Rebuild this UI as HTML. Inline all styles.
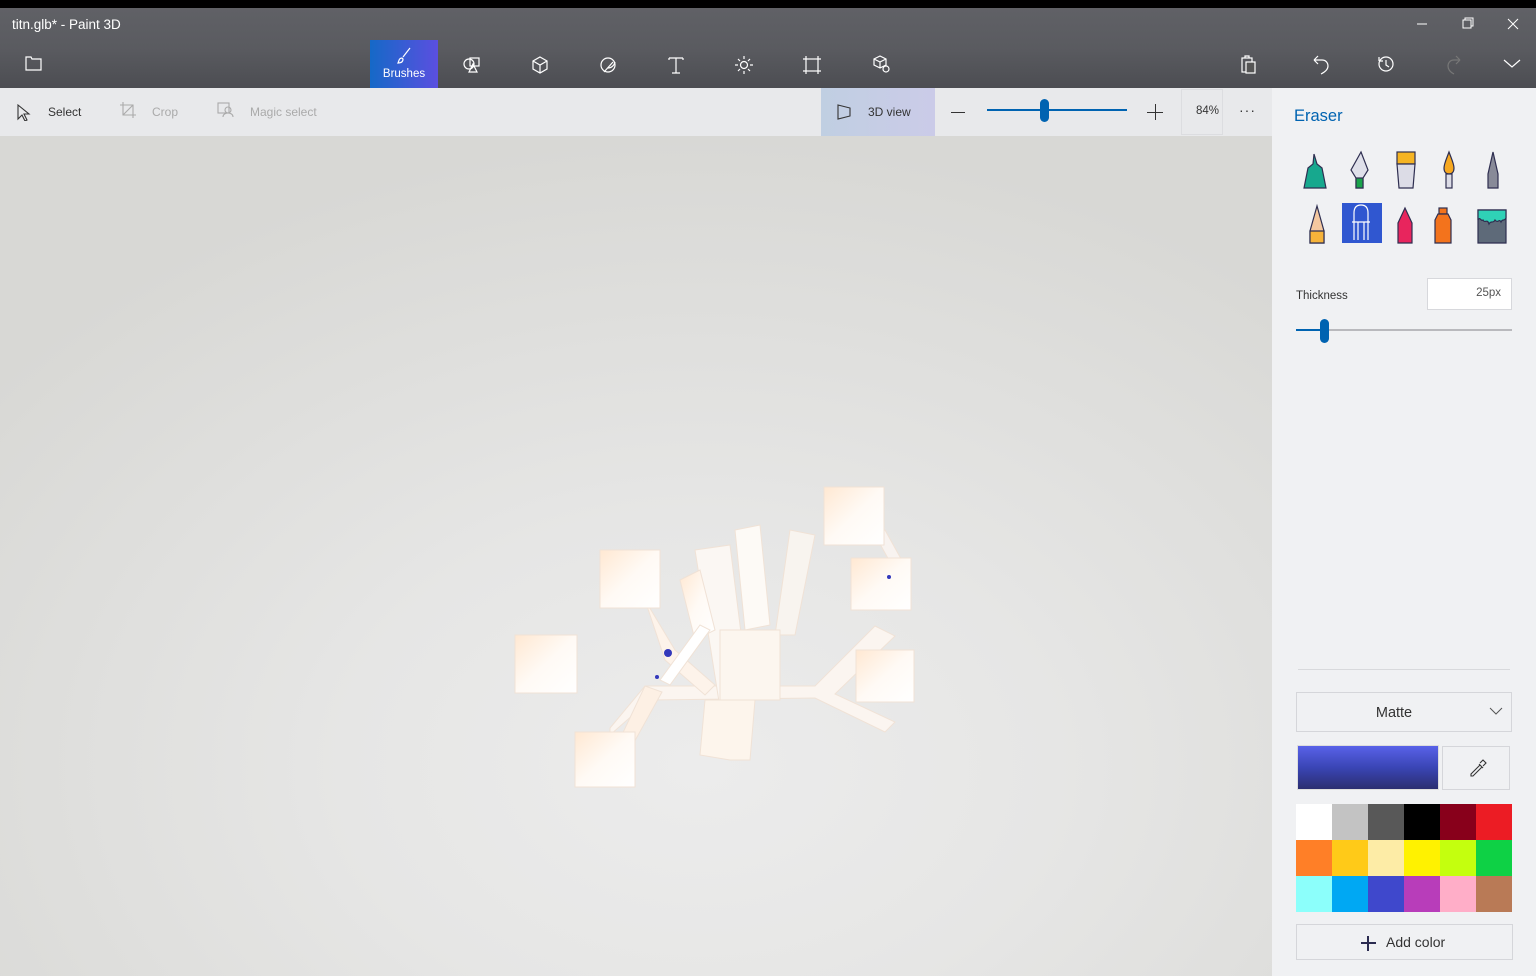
<!DOCTYPE html>
<html><head><meta charset="utf-8"><style>
*{margin:0;padding:0;box-sizing:border-box}
body{width:1536px;height:976px;overflow:hidden;font-family:"Segoe UI","Liberation Sans",sans-serif;background:#e5e5e3;position:relative}
.abs{position:absolute}
#blk{left:0;top:0;width:1536px;height:8px;background:#000}
#top{left:0;top:8px;width:1536px;height:80px;background:linear-gradient(180deg,#606166 0%,#5a5b60 50%,#4c4d52 100%)}
#title{left:12px;top:17px;color:#fff;font-size:13.5px}
#tools{left:0;top:88px;width:1272px;height:48px;background:#e8e9eb}
#canvas{left:0;top:136px;width:1272px;height:840px;background:radial-gradient(ellipse 70% 75% at 55% 75%,#ececec 0%,#e6e6e5 40%,#d8d8d5 100%)}
#side{left:1272px;top:88px;width:264px;height:888px;background:#f0f1f3}
.tb{color:#333;font-size:12px}
.dis{color:#aaa}
svg{display:block}
</style></head><body>
<div class="abs" id="blk"></div>
<div class="abs" id="top"></div>
<div class="abs" id="title">titn.glb* - Paint 3D</div>
<svg class="abs" style="left:1408px;top:14px" width="120" height="20" fill="none" stroke="#fff" stroke-width="1"><line x1="9" y1="10" x2="19" y2="10"/><rect x="55" y="6" width="8" height="8"/><path d="M57 6V4h8v8h-2"/><path d="M100 5l10 10M110 5l-10 10"/></svg>
<svg class="abs" style="left:24px;top:54px" width="20" height="18" fill="none" stroke="#fff" stroke-width="1.2"><path d="M2 3h5l1 2h9v11H2z"/></svg>
<div class="abs" style="left:370px;top:40px;width:68px;height:48px;background:linear-gradient(90deg,#1569c7,#5b4fe0)"></div>
<svg class="abs" style="left:394px;top:46px" width="20" height="20" fill="none" stroke="#fff" stroke-width="1.2"><path d="M16 2L9 11M8 12c-3 0-3 3-4 5 3 0 5-1 5-4z"/></svg>
<div class="abs" style="left:370px;top:68px;width:68px;text-align:center;color:#fff;font-size:11.5px">Brushes</div>
<svg class="abs" style="left:460px;top:52px" width="440" height="26" fill="none" stroke="#fff" stroke-width="1.2">
<circle cx="9" cy="12" r="5"/><rect x="10" y="6" width="9" height="8"/><path d="M13 12l-4 8h8z"/>
<path d="M80 5l7 4v8l-7 4-7-4V9zM73 9l7 4 7-4M80 13v8"/>
<circle cx="148" cy="13" r="7"/><path d="M144 20l9-10M148 16c3 0 6-2 7-6"/>
<path d="M209 6h14M216 6v15M212 21h8M209 6v2M223 6v2"/>
<circle cx="284" cy="13" r="3.5"/><path d="M284 4v3M284 19v3M275 13h3M290 13h3M278 7l2 2M288 17l2 2M278 19l2-2M288 9l2-2"/>
<rect x="346" y="7" width="12" height="12"/><path d="M346 4v3M358 4v3M346 19v3M358 19v3M343 7h3M358 7h3M343 19h3M358 19h3"/>
<path d="M420 4l6 3v6l-6 3-6-3V7zM414 7l6 3 6-3M420 10v6"/><circle cx="426" cy="17" r="3"/>
</svg>
<svg class="abs" style="left:1238px;top:52px" width="290" height="26" fill="none" stroke="#fff" stroke-width="1.2">
<rect x="4" y="6" width="10" height="14"/><rect x="8" y="10" width="9" height="11" fill="#555"/><path d="M7 6V4h4v2"/>
<path d="M76 8h8c4 0 6 3 6 6s-3 6-7 8M76 8l4-4M76 8l4 4"/>
<circle cx="148" cy="12" r="7"/><path d="M148 8v5l3 2M141 9l0-4M141 9h4"/>
<path d="M222 8h-6c-4 0-6 3-6 6s2 6 6 8M222 8l-4-4M222 8l-4 4" stroke="#777"/>
<path d="M266 8l8 7 8-7"/>
</svg>
<div class="abs" id="tools"></div>
<svg class="abs" style="left:16px;top:103px" width="16" height="18" fill="none" stroke="#333" stroke-width="1.1"><path d="M2 2l11 9h-5l3 6-2 1-3-6-4 4z"/></svg>
<div class="abs tb" style="left:48px;top:105px">Select</div>
<svg class="abs" style="left:119px;top:101px" width="18" height="18" fill="none" stroke="#aaa" stroke-width="1.1"><path d="M4 1v13h13M1 4h13v13M14 4L4 14"/></svg>
<div class="abs tb dis" style="left:152px;top:105px">Crop</div>
<svg class="abs" style="left:217px;top:102px" width="18" height="16" fill="none" stroke="#aaa" stroke-width="1.1"><rect x="1" y="1" width="11" height="10"/><circle cx="11" cy="8" r="3"/><path d="M6 15c0-3 3-4 5-4s5 1 5 4"/></svg>
<div class="abs tb dis" style="left:250px;top:105px">Magic select</div>
<div class="abs" style="left:821px;top:88px;width:114px;height:48px;background:linear-gradient(90deg,#c0cfe2,#cbcbe8)"></div>
<svg class="abs" style="left:836px;top:103px" width="18" height="18" fill="none" stroke="#333" stroke-width="1.1"><path d="M2 2l12 3v8L2 16z"/></svg>
<div class="abs tb" style="left:868px;top:105px">3D view</div>
<div class="abs" style="left:951px;top:112px;width:14px;height:1px;background:#333"></div>
<div class="abs" style="left:987px;top:109px;width:140px;height:2px;background:#0063b1"></div>
<div class="abs" style="left:1040px;top:99px;width:9px;height:23px;border-radius:5px;background:#0063b1"></div>
<div class="abs" style="left:1147px;top:112px;width:16px;height:1px;background:#333"></div>
<div class="abs" style="left:1155px;top:104px;width:1px;height:16px;background:#333"></div>
<div class="abs" style="left:1181px;top:89px;width:42px;height:46px;border:1px solid #dcdde0"></div>
<div class="abs tb" style="left:1196px;top:105px;font-size:11.5px">84%</div>
<div class="abs tb" style="left:1239px;top:102px;font-size:14px;letter-spacing:1px">···</div>
<div class="abs" id="canvas"></div>
<svg class="abs" style="left:500px;top:470px" width="430" height="330">
<defs><linearGradient id="g" x1="0" x2="1" y1="0" y2="1"><stop offset="0" stop-color="#ffe8d2"/><stop offset=".5" stop-color="#fffaf5"/><stop offset="1" stop-color="#fff"/></linearGradient></defs>
<g fill="url(#g)" stroke="#f0e2d6" stroke-width="1">
<path d="M110 258l35-42h170l60-60 20 10-60 58 60 28-10 10-70-34-165 2-40 35z" fill="#fbf5f0"/>
<path d="M145 216L110 290l12 4 40-72z" fill="#fdf0e4"/>
<path d="M145 130l20 60 40 35 10-10-40-35z" fill="#fdf3ea"/>
<path d="M385 60l25 45-10 5-25-45z" fill="#f8f3f0"/>
<rect x="100" y="80" width="60" height="58"/>
<rect x="15" y="165" width="62" height="58"/>
<rect x="75" y="262" width="60" height="55"/>
<rect x="324" y="17" width="60" height="58"/>
<rect x="351" y="88" width="60" height="52"/>
<rect x="356" y="180" width="58" height="52"/>
<path d="M195 80l35-5 20 160-30 3z" fill="#fbf7f3"/>
<path d="M235 60l25-5 10 100-25 5z" fill="#fdfaf6"/>
<path d="M290 60l25 5-20 100-20 0z" fill="#f8f4ef"/>
<path d="M180 110l20-10 15 60-20 10z"/>
<path d="M220 160h60v70h-60z" fill="#fcf6ef"/>
<path d="M205 230h50l-5 60-20 0-30-5z" fill="#fdf5ec"/>
<path d="M160 210l40-55 10 5-40 55z" fill="#fff"/>
</g>
<circle cx="168" cy="183" r="4" fill="#3338bb"/><circle cx="157" cy="207" r="2" fill="#3338bb"/><circle cx="389" cy="107" r="2" fill="#3338bb"/>
</svg>
<div class="abs" id="side"></div>
<div class="abs" style="left:1294px;top:107px;color:#0063b1;font-size:16.5px">Eraser</div>
<svg class="abs" style="left:1296px;top:148px" width="220" height="100" stroke="#2e2e50" stroke-width="1.2">
<path d="M18 6l3 10 5 4 4 20H8l4-20 5-4z" fill="#17a88e"/>
<path d="M65 4l7 18-5 8v10h-7V30l-5-8z" fill="#dfe0ea"/><rect x="60" y="30" width="7" height="10" fill="#1aa34a"/>
<rect x="101" y="4" width="18" height="12" fill="#f5b423"/><path d="M101 16h18l-2 24h-14z" fill="#dcdce6"/>
<path d="M153 4c-3 8-5 12-5 16s2 6 5 6 5-2 5-6-2-8-5-16z" fill="#f6a820"/><rect x="150" y="26" width="6" height="14" fill="#dcdce6"/>
<path d="M197 4l5 22v14h-10V26z" fill="#888a98"/>
<path d="M21 58l-7 25v12h14V83z" fill="#f4c8a0"/><path d="M14 83h14v12H14z" fill="#f6b33a"/>
<rect x="46" y="55" width="40" height="40" fill="#3057d0" stroke="none"/><path d="M58 92V65q0-8 7-8t7 8v27M56 74h18M62 74v18M68 74v18" fill="none" stroke="#fff"/>
<path d="M109 60l-7 15v20h14V75z" fill="#e8255d"/>
<rect x="143" y="60" width="8" height="6" fill="#f3731c"/><path d="M142 66h10l3 6v23h-16V72z" fill="#f3731c"/>
<path d="M182 62h28v33h-28z" fill="#5e6a79"/><path d="M182 62h28v8c-2 4-3 0-5 4-2-4-3 2-6-2-2 4-4 0-6 4-2-6-4 0-6-4-2 2-3-4-5 0z" fill="#2fd1b6"/>
</svg>
<div class="abs" style="left:1296px;top:290px;font-size:11.5px;color:#333">Thickness</div>
<div class="abs" style="left:1427px;top:278px;width:85px;height:32px;background:#fff;border:1px solid #d7d8dc;text-align:right;padding:8px 10px 0 0;font-size:11.5px;color:#555">25px</div>
<div class="abs" style="left:1296px;top:329px;width:216px;height:2px;background:#b9b9bd"></div>
<div class="abs" style="left:1296px;top:329px;width:28px;height:2px;background:#0063b1"></div>
<div class="abs" style="left:1320px;top:319px;width:9px;height:24px;border-radius:5px;background:#0063b1"></div>
<div class="abs" style="left:1298px;top:669px;width:212px;height:1px;background:#d8d9dc"></div>
<div class="abs" style="left:1296px;top:692px;width:216px;height:40px;border:1px solid #d5d6da;text-align:center;line-height:40px;font-size:14.5px;color:#333;padding-right:20px">Matte</div>
<svg class="abs" style="left:1489px;top:706px" width="14" height="10" fill="none" stroke="#555"><path d="M1 2l6 6 6-6"/></svg>
<div class="abs" style="left:1297px;top:745px;width:142px;height:45px;border:1px solid #ddd;background:linear-gradient(180deg,#5962e8,#3a45b5 50%,#2b2e70)"></div>
<div class="abs" style="left:1442px;top:746px;width:68px;height:44px;border:1px solid #d5d6da"></div>
<svg class="abs" style="left:1468px;top:757px" width="20" height="20" fill="none" stroke="#333" stroke-width="1.1"><path d="M3 17l9-9 2 2-9 9H3zM12 6l3-3 3 3-3 3M11 7l4 4"/></svg>
<div class="abs" style="left:1296px;top:804px;width:216px;height:108px;display:grid;grid-template-columns:repeat(6,36px);grid-template-rows:repeat(3,36px)">
<div style="background:#fff"></div><div style="background:#c3c3c3"></div><div style="background:#585858"></div><div style="background:#000"></div><div style="background:#88001b"></div><div style="background:#ec1c24"></div>
<div style="background:#ff7f27"></div><div style="background:#ffca18"></div><div style="background:#fdeca6"></div><div style="background:#fff200"></div><div style="background:#c4ff0e"></div><div style="background:#0ed145"></div>
<div style="background:#8cfffb"></div><div style="background:#00a8f3"></div><div style="background:#3f48cc"></div><div style="background:#b83dba"></div><div style="background:#ffaec8"></div><div style="background:#b97a56"></div>
</div>
<div class="abs" style="left:1296px;top:924px;width:217px;height:36px;border:1px solid #d5d6da"></div>
<div class="abs" style="left:1361px;top:942px;width:15px;height:2px;background:#2b2b50"></div>
<div class="abs" style="left:1367px;top:936px;width:2px;height:15px;background:#2b2b50"></div>
<div class="abs" style="left:1386px;top:934px;font-size:14px;color:#333">Add color</div>
</body></html>
